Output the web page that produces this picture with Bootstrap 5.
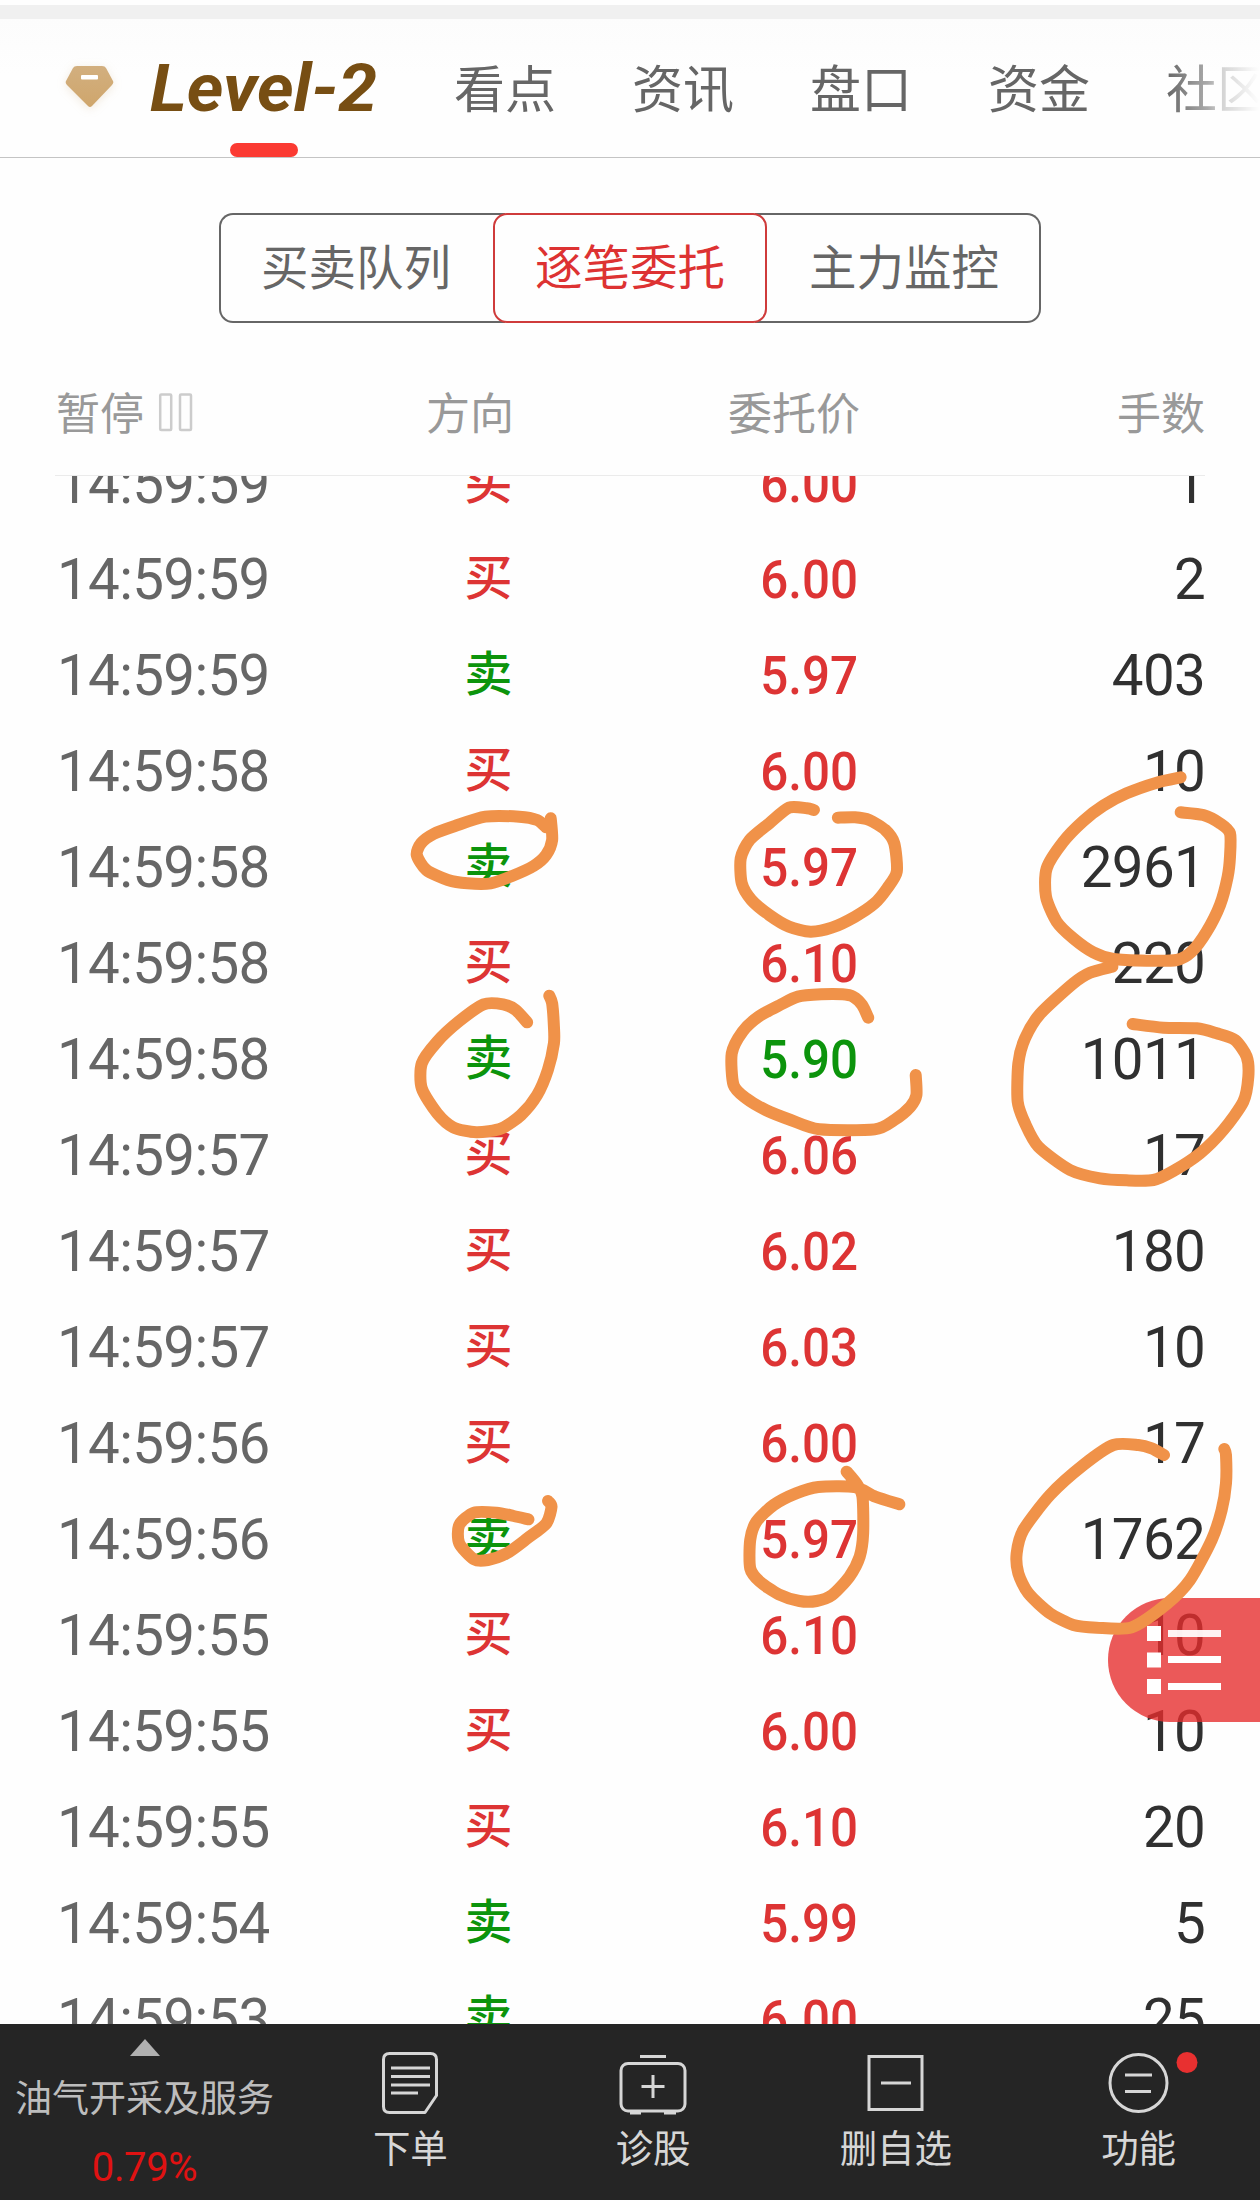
<!DOCTYPE html>
<html lang="zh-CN">
<head>
<meta charset="utf-8">
<meta name="viewport" content="width=device-width, initial-scale=1">
<title>Level-2 逐笔委托</title>
<link href="https://cdn.jsdelivr.net/npm/bootstrap@5.3.0/dist/css/bootstrap.min.css" rel="stylesheet">
<style>
  body { background: #fefefe; font-family: Roboto, "Noto Sans CJK SC", sans-serif; color: #666; }
  .screen { width: 1260px; height: 2200px; }
  .strip { height: 14px; margin-top: 5px; background: #f0f0f0; }
  .topbar { height: 139px; border-bottom: 1px solid #c4c4c4; background: linear-gradient(#fcfcfc, #fefefe 40%); }
  .gem { width: 60px; height: 60px; margin-left: 60px; filter: drop-shadow(0 2px 5px rgba(190,150,90,.2)); }
  .level { width: 303px; padding-left: 30px; font-size: 67px; line-height: 80px; font-weight: 700; font-style: italic; color: #774e13; white-space: nowrap; }
  .level span { display: inline-block; transform: scaleX(1.045); transform-origin: left; }
  .level-bar { left: 230px; bottom: 0; width: 68px; height: 14px; border-radius: 7px; background: #fb3a32; }
  .tab-item { width: 178px; font-size: 51px; line-height: 80px; padding-top: 5px; white-space: nowrap; color: #666; }
  .tab-fade { width: 93px; -webkit-mask-image: linear-gradient(90deg, #000 0, rgba(0,0,0,.55) 45%, rgba(0,0,0,.28) 60%, transparent 100%); mask-image: linear-gradient(90deg, #000 0, rgba(0,0,0,.55) 45%, rgba(0,0,0,.28) 60%, transparent 100%); }
  .seg-wrap { margin-top: 55px; height: 110px; width: 822px; }
  .seg-wrap .seg { border: 2px solid #666; color: #666; font-size: 47.5px; line-height: 108px; text-align: center; height: 110px; flex: 1 1 0; white-space: nowrap; }
  .seg-wrap .seg-l { border-radius: 14px 0 0 14px; border-right: 0; margin-right: -12px; padding-right: 14px; }
  .seg-wrap .seg-r { border-radius: 0 14px 14px 0; border-left: 0; margin-left: -12px; padding-left: 14px; }
  .seg-wrap .seg-on { border-color: #cf3b3b; color: #dd3232; border-radius: 14px; background: #fefefe; z-index: 1; flex: 0 0 274px; }
  .cols { margin: 0 55px; }
  .c1 { width: 250px; } .c2 { width: 209px; } .c3 { width: 346px; } .c4 { width: 345px; }
  .thead-line { height: 153px; padding-top: 59px; border-bottom: 1px solid #ebebeb; font-size: 44px; line-height: 66px; color: #999; }
  .feed { height: 1548px; }
  .feed-rows { margin-top: -40px; }
  .tick { height: 96px; white-space: nowrap; }
  .t-time { font-size: 56.5px; color: #666; padding-left: 2px; letter-spacing: -.65px; }
  .t-dir { font-size: 48px; font-weight: 500; position: relative; top: -1px; left: -1.5px; }
  .t-price { font-size: 54.5px; font-weight: 500; padding-right: 2px; }
  .t-price span { display: inline-block; transform: scaleX(.905); transform-origin: right; }
  .t-qty { font-size: 56.5px; color: #303030; letter-spacing: -.7px; }
  .buy { color: #dd3434; } .sell { color: #0c940c; }
  .dock { height: 176px; background: #252525; color: #d6d6d6; }
  .dock-index { width: 289px; }
  .dock-item { flex: 1 1 0; font-size: 37.5px; line-height: 50px; padding-top: 22px; }
  .dock-item svg { width: 100px; height: 76px; }
  .dock-item div { margin-top: 2px; }
  .fab { right: 0; top: 1598px; width: 152px; height: 124px; border-radius: 62px 0 0 62px; background: rgba(230,44,44,.79); }
  .ink { left: 0; top: 0; width: 1260px; height: 2200px; pointer-events: none; }
  .ink path { fill: none; stroke: #f09249; stroke-width: 12; stroke-linecap: round; stroke-linejoin: round; }
</style>
</head>
<body>
<div class="screen position-relative overflow-hidden d-flex flex-column">
  <div class="strip flex-shrink-0"></div>
  <nav class="topbar position-relative d-flex align-items-center flex-shrink-0 overflow-hidden">
    <svg class="gem flex-shrink-0" viewBox="0 0 60 60">
      <defs><linearGradient id="gold" x1="0" y1="0" x2="0" y2="1"><stop offset="0" stop-color="#d2af7f"/><stop offset="1" stop-color="#cfa66c"/></linearGradient></defs>
      <path d="M17 8h25q3 0 4 2l7 13q1 2-1 4L32 48q-2 2-4 0L7 27q-2-2-1-4L13 10q1-2 4-2z" fill="url(#gold)"/>
      <rect x="21" y="17" width="17" height="4.500" rx="1" fill="#fff"/>
    </svg>
    <div class="level flex-shrink-0"><span>Level-2</span></div>
    <div class="level-bar position-absolute"></div>
    <div class="d-flex" style="margin-left:31px">
      <div class="tab-item">看点</div><div class="tab-item">资讯</div><div class="tab-item">盘口</div><div class="tab-item">资金</div><div class="tab-item tab-fade overflow-hidden">社区</div>
    </div>
  </nav>
  <div class="seg-wrap d-flex mx-auto flex-shrink-0">
    <div class="seg seg-l">买卖队列</div>
    <div class="seg seg-on position-relative">逐笔委托</div>
    <div class="seg seg-r">主力监控</div>
  </div>
  <div class="thead-line cols d-flex flex-shrink-0">
    <div class="c1 d-flex"><span style="margin-left:1px">暂停</span>
      <svg width="36" height="42" style="margin:11px 0 0 14px" viewBox="0 0 36 42" fill="none" stroke="#ccc" stroke-width="2.500"><rect x="2.200" y="1.500" width="11" height="35.500" rx="1"/><rect x="22" y="1.500" width="11" height="35.500" rx="1"/></svg></div>
    <div class="c2 text-end">方向</div><div class="c3 text-end">委托价</div><div class="c4 text-end">手数</div>
  </div>
  <div class="feed flex-shrink-0 overflow-hidden"><div class="feed-rows cols" id="rows"></div></div>
  <footer class="dock d-flex flex-shrink-0">
    <div class="dock-index d-flex flex-column align-items-center">
      <svg width="30" height="17" viewBox="0 0 30 17" style="margin-top:15px"><path d="M15 0 30 17H0z" fill="#b0b0b0"/></svg>
      <div style="font-size:37px;line-height:50px;margin-top:19px;color:#bdbdbd">油气开采及服务</div>
      <div style="font-size:40px;line-height:44px;margin-top:21px;color:#e01212;letter-spacing:-.4px">0.79%</div>
    </div>
    <div class="dock-item d-flex flex-column align-items-center">
      <svg viewBox="0 0 100 76" fill="none" stroke="#d6d6d6" stroke-width="3"><path d="M29.500 7.500h41q6 0 6 6v36L65 66.500H29.500q-6 0-6-6v-47q0-6 6-6z" stroke-linejoin="round"/><path d="M31 22h39M31 30.500h39M31 39h39M31 47h27"/></svg>
      <div>下单</div></div>
    <div class="dock-item d-flex flex-column align-items-center">
      <svg viewBox="0 0 100 76" fill="none" stroke="#d6d6d6" stroke-width="3"><rect x="18" y="17.500" width="64" height="47.500" rx="7"/><path d="M37 10.500h26M50 29v23M38.500 40.500h23M27 67h11M61 67h12"/></svg>
      <div>诊股</div></div>
    <div class="dock-item d-flex flex-column align-items-center">
      <svg viewBox="0 0 100 76" fill="none" stroke="#d6d6d6" stroke-width="3"><rect x="23" y="10.500" width="53" height="53"/><path d="M35 37h30"/></svg>
      <div>删自选</div></div>
    <div class="dock-item d-flex flex-column align-items-center">
      <svg class="overflow-visible" viewBox="0 0 100 76" fill="none" stroke="#d6d6d6" stroke-width="3"><circle cx="49.500" cy="37" r="28.500"/><path d="M36 29h27l-1 0M36 45.500h26"/><circle cx="98" cy="16.500" r="10.500" fill="#e83030" stroke="none"/></svg>
      <div>功能</div></div>
  </footer>
  <div class="fab position-absolute">
    <svg width="152" height="124" fill="#fff"><path d="M39 28h14v15H39zM39 54.500h14v15H39zM39 81h14v15H39zM60 58h53v7H60zM60 85h53v7H60z"/><path d="M60 32h53v7H60z" opacity=".93"/></svg>
  </div>
  <svg class="ink position-absolute" id="ink" viewBox="0 0 1260 2200"></svg>
</div>
<script>
const ticks = [
  ['14:59:59','买','6.00','1'],['14:59:59','买','6.00','2'],['14:59:59','卖','5.97','403'],['14:59:58','买','6.00','10'],
  ['14:59:58','卖','5.97','2961'],['14:59:58','买','6.10','220'],['14:59:58','卖','5.90','1011'],['14:59:57','买','6.06','17'],
  ['14:59:57','买','6.02','180'],['14:59:57','买','6.03','10'],['14:59:56','买','6.00','17'],['14:59:56','卖','5.97','1762'],
  ['14:59:55','买','6.10','10'],['14:59:55','买','6.00','10'],['14:59:55','买','6.10','20'],['14:59:54','卖','5.99','5'],['14:59:53','卖','6.00','25']];
document.getElementById('rows').innerHTML = ticks.map(([t, d, p, q]) =>
  `<div class="tick d-flex align-items-center"><div class="c1 t-time">${t}</div><div class="c2 t-dir text-end ${d === '买' ? 'buy' : 'sell'}">${d}</div><div class="c3 t-price text-end ${p === '5.90' ? 'sell' : 'buy'}"><span>${p}</span></div><div class="c4 t-qty text-end">${q}</div></div>`).join('');

// Pen strokes: [originX, originY, scaleX, scaleY, points]
const strokes = [
  [380,740,2.8,3,[478,235,482,300,465,345,430,378,370,408,310,430,245,430,190,420,130,390,103,345,115,310,150,282,210,258,295,230,390,230,440,240,465,262]],
  [380,740,2.8,3,[1215,210,1195,205,1145,203,1090,250,1035,300,1010,355,1013,430,1040,480,1090,525,1145,560,1205,575,1265,563,1330,530,1385,490,1420,445,1447,395,1440,310,1415,270,1370,240,1330,232,1282,233]],
  [380,740,2.8,3,[474,767,482,790,487,860,487,910,470,990,440,1065,395,1125,340,1165,270,1177,205,1162,160,1120,117,1045,117,970,160,905,220,845,290,793,345,793,380,810,412,847]],
  [380,740,2.8,3,[1367,833,1350,795,1325,770,1295,763,1235,763,1170,770,1120,795,1060,830,1015,875,985,940,990,1035,1025,1075,1080,1110,1150,1140,1230,1168,1385,1168,1440,1140,1485,1100,1502,1065,1500,1005]],
  [960,740,3,3,[662,112,590,128,500,160,430,197,370,243,310,305,260,385,258,470,290,545,340,595,400,637,460,657,560,662,650,660,695,635,740,575,780,495,803,410,810,350,810,280,780,250,730,225,662,217]],
  [960,740,3,3,[457,680,390,698,340,730,240,822,195,895,175,970,173,1085,195,1150,235,1220,330,1290,420,1315,500,1321,580,1320,640,1293,720,1240,790,1170,850,1085,865,1010,860,950,825,900,770,880,710,865,610,863,518,852]],
  [400,1400,2.904,3,[430,303,440,320,425,370,370,415,310,460,255,480,215,478,172,430,172,375,215,338,280,338,330,348,373,358]],
  [400,1400,2.904,3,[1297,215,1325,250,1343,290,1345,400,1335,470,1305,530,1255,585,1210,603,1160,603,1100,583,1045,545,1017,505,1017,420,1035,365,1085,315,1150,280,1215,261,1320,261,1380,290,1450,313]],
  [960,1400,3,3,[793,147,798,165,798,250,785,330,755,420,690,540,620,612,515,682,410,683,340,675,270,640,205,580,175,520,170,460,190,390,270,285,370,195,460,135,535,135,575,145,612,165]]];
document.getElementById('ink').innerHTML = strokes.map(([ox, oy, sx, sy, raw]) => {
  const p = [];
  for (let i = 0; i < raw.length; i += 2) p.push([ox + raw[i] / sx, oy + raw[i + 1] / sy]);
  let d = `M${p[0]}`;
  for (let i = 0; i < p.length - 1; i++) {
    const a = p[i - 1] || p[i], b = p[i], c = p[i + 1], e = p[i + 2] || c, k = 8;
    d += `C${b[0] + (c[0] - a[0]) / k} ${b[1] + (c[1] - a[1]) / k} ${c[0] - (e[0] - b[0]) / k} ${c[1] - (e[1] - b[1]) / k} ${c}`;
  }
  return `<path d="${d}"/>`;
}).join('');
</script>
<script src="https://cdn.jsdelivr.net/npm/bootstrap@5.3.0/dist/js/bootstrap.bundle.min.js"></script>
</body>
</html>
